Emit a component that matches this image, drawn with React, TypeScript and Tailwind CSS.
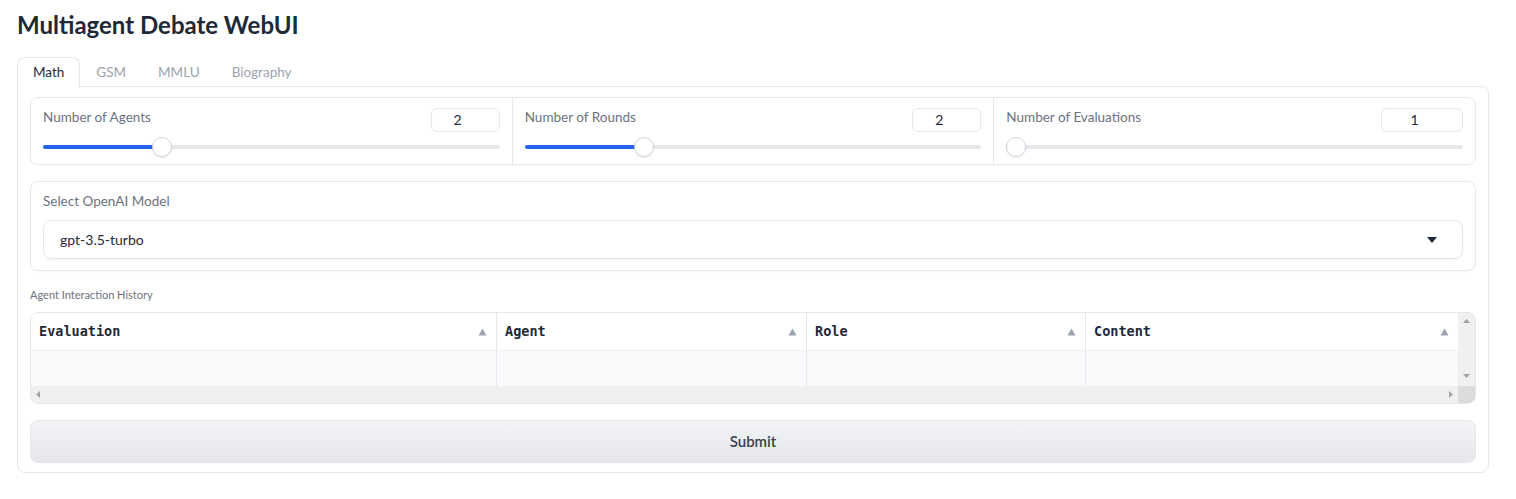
import React from "react";

const sans = "font-['Lato','Noto_Sans',sans-serif]";
const mono = "font-['DejaVu_Sans_Mono','Liberation_Mono',monospace]";

type SliderProps = {
  label: string;
  value: number;
  min: number;
  max: number;
  inputWidth: string;
  first?: boolean;
};

function SliderField({ label, value, min, max, inputWidth, first }: SliderProps) {
  const frac = (value - min) / (max - min);
  // thumb centre = left + 10px + frac * (width - 20px)
  const pos = `calc(10px + ${frac} * (100% - 20px))`;

  return (
    <div className={"flex-1 px-3 pt-[10px] pb-[7px] " + (first ? "" : "border-l border-[#e5e7eb]")}>
      <div className="flex items-start justify-between">
        <span className="-mt-px text-[13.5px] leading-[20px] text-[#6b7280]">{label}</span>
        <div
          className={
            inputWidth +
            " h-[24px] rounded-md border border-[#e5e7eb] pr-[15px] text-center text-[14px] leading-[22px] text-[#1f2937]"
          }
        >
          {value}
        </div>
      </div>
      <div className="relative mt-[5px] h-[20px]">
        <div className="absolute left-0 right-0 top-[8px] h-[4px] rounded-full bg-[#e5e7eb]" />
        <div
          className="absolute left-0 top-[8px] h-[4px] rounded-full bg-[#2563eb]"
          style={{ width: pos }}
        />
        <div
          className="absolute top-0 h-[20px] w-[20px] -translate-x-1/2 rounded-full border border-[#d1d5db] bg-white shadow-[0_1px_2px_rgba(0,0,0,0.08)]"
          style={{ left: pos }}
        />
      </div>
    </div>
  );
}

function SortArrow() {
  return (
    <svg width="9" height="8" viewBox="0 0 9 8" className="shrink-0">
      <path d="M4.5 0.5 L8.5 7.5 L0.5 7.5 Z" fill="#9ca3af" />
    </svg>
  );
}

const columns = [
  { name: "Evaluation", width: "w-[465px]" },
  { name: "Agent", width: "w-[310px]" },
  { name: "Role", width: "w-[279px]" },
  { name: "Content", width: "flex-1" },
];

function HistoryTable() {
  return (
    <div className="flex flex-col gap-[9px]">
      <span className="text-[11px] leading-[16px] text-[#6b7280]">Agent Interaction History</span>
      <div className="overflow-hidden rounded-lg border border-[#e5e7eb]">
        <div className="flex">
          <div className="flex min-w-0 flex-1 flex-col">
            <div className="flex h-[37px] bg-white">
              {columns.map((c, i) => (
                <div
                  key={c.name}
                  className={
                    c.width +
                    " flex items-center justify-between pl-[8px] pr-[9px] " +
                    (i > 0 ? "border-l border-[#e5e7eb]" : "")
                  }
                >
                  <span className={mono + " text-[13.5px] font-bold text-[#1f2937]"}>{c.name}</span>
                  <SortArrow />
                </div>
              ))}
            </div>
            <div className="flex h-[36px] border-t border-[#f0f1f3] bg-[#f9fafb]">
              {columns.map((c, i) => (
                <div
                  key={c.name}
                  className={c.width + " " + (i > 0 ? "border-l border-[#e5e7eb]" : "")}
                />
              ))}
            </div>
            <div className="flex h-[17px] items-center justify-between bg-[#f0f0f0] px-[5px]">
              <svg width="4" height="7" viewBox="0 0 4 7">
                <path d="M4 0 L0 3.5 L4 7 Z" fill="#a3a3a3" />
              </svg>
              <svg width="4" height="7" viewBox="0 0 4 7">
                <path d="M0 0 L4 3.5 L0 7 Z" fill="#a3a3a3" />
              </svg>
            </div>
          </div>
          <div className="flex w-[17px] flex-col bg-[#f0f0f0]">
            <div className="flex flex-1 flex-col items-center justify-between pt-[6px] pb-[8px]">
              <svg width="7" height="4" viewBox="0 0 7 4">
                <path d="M0 4 L3.5 0 L7 4 Z" fill="#a3a3a3" />
              </svg>
              <svg width="7" height="4" viewBox="0 0 7 4">
                <path d="M0 0 L3.5 4 L7 0 Z" fill="#a3a3a3" />
              </svg>
            </div>
            <div className="h-[17px] bg-[#dcdcdc]" />
          </div>
        </div>
      </div>
    </div>
  );
}

export default function App() {
  const tabs = ["Math", "GSM", "MMLU", "Biography"];

  return (
    <div className={sans + " min-h-[499px] bg-white pl-[17px] pt-[9px]"}>
      <div className="w-[1472px]">
        <h1 className="text-[24px] font-bold leading-[32px] text-[#1f2937]">Multiagent Debate WebUI</h1>

        <div className="mt-[16px] flex">
          {tabs.map((t, i) => (
            <div
              key={t}
              className={
                "relative z-10 border border-b-0 px-[15px] pt-[5px] pb-[4px] text-[13.5px] leading-[19px] " +
                (i === 0
                  ? "-mb-px rounded-t-lg border-[#e5e7eb] bg-white text-[#1f2937]"
                  : "border-transparent text-[#9ca3af]")
              }
            >
              {t}
            </div>
          ))}
        </div>

        <div className="flex flex-col gap-4 rounded-b-lg rounded-tr-lg border border-[#e5e7eb] px-3 pt-[10px] pb-[9px]">
          <div className="flex rounded-lg border border-[#e5e7eb] shadow-[0_1px_2px_rgba(0,0,0,0.03)]">
            <SliderField first label="Number of Agents" value={2} min={1} max={5} inputWidth="w-[69px]" />
            <SliderField label="Number of Rounds" value={2} min={1} max={5} inputWidth="w-[69px]" />
            <SliderField label="Number of Evaluations" value={1} min={1} max={5} inputWidth="w-[82px]" />
          </div>

          <div className="flex flex-col gap-[9px] rounded-lg border border-[#e5e7eb] px-3 pt-[9px] pb-[11px] shadow-[0_1px_2px_rgba(0,0,0,0.03)]">
            <span className="text-[13.5px] leading-[20px] text-[#6b7280]">Select OpenAI Model</span>
            <div className="flex h-[39px] items-center justify-between rounded-lg border border-[#e5e7eb] pl-[16px] pr-[25px] shadow-[0_1px_2px_rgba(0,0,0,0.04)]">
              <span className="text-[14px] text-[#1f2937]">gpt-3.5-turbo</span>
              <svg width="10" height="6" viewBox="0 0 10 6">
                <path d="M0 0 L10 0 L5 6 Z" fill="#1f2937" />
              </svg>
            </div>
          </div>

          <HistoryTable />

          <button
            type="button"
            className="h-[43px] rounded-lg border border-[#e5e7eb] bg-gradient-to-b from-[#f3f4f6] to-[#e5e7eb] text-[15px] font-semibold text-[#374151]"
          >
            Submit
          </button>
        </div>
      </div>
    </div>
  );
}
